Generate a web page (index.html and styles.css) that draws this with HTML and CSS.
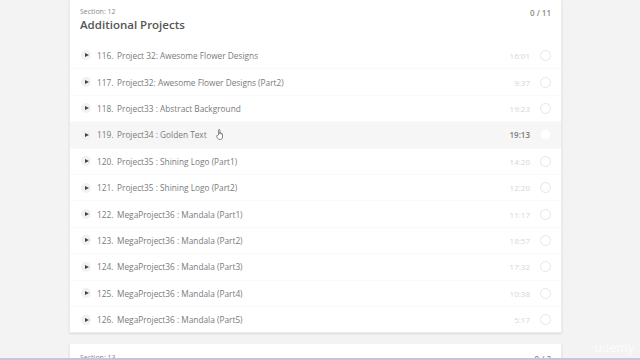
FILE: index.html
```html
<!DOCTYPE html>
<html>
<head>
<meta charset="utf-8">
	<title>Curriculum</title>
	<link rel="stylesheet" href="styles.css">
</head>
<body>
	<div class="page">
		<div class="section">
			<div class="section-head">
				<div class="head-text">
					<div class="section-no">Section: 12</div>
					<div class="section-title">Additional Projects</div>
				</div>
				<div class="count">0 / 11</div>
			</div>
			<ul class="lectures">
				<li><span class="play"></span><span class="num">116.</span><span class="name">Project 32: Awesome Flower Designs</span><span class="time">16:01</span><span class="check"></span></li>
				<li><span class="play"></span><span class="num">117.</span><span class="name">Project32: Awesome Flower Designs (Part2)</span><span class="time">9:37</span><span class="check"></span></li>
				<li><span class="play"></span><span class="num">118.</span><span class="name">Project33 : Abstract Background</span><span class="time">19:23</span><span class="check"></span></li>
				<li class="hover"><span class="play"></span><span class="num">119.</span><span class="name">Project34 : Golden Text<svg class="hand" width="8" height="11" viewBox="0 0 8 11"><path d="M2.5 6V1.2a.7.7 0 0 1 1.4 0V5l.1-1a.7.7 0 0 1 1.3.2V5.3a.6.6 0 0 1 1.2.1V8c0 1.6-1 2.5-2.4 2.5S1.7 9.8 1.2 8.6L.6 7.2a.6.6 0 0 1 1-.6z" fill="#fff" stroke="#555" stroke-width=".7"/></svg></span><span class="time">19:13</span><span class="check"></span></li>
				<li><span class="play"></span><span class="num">120.</span><span class="name">Project35 : Shining Logo (Part1)</span><span class="time">14:20</span><span class="check"></span></li>
				<li><span class="play"></span><span class="num">121.</span><span class="name">Project35 : Shining Logo (Part2)</span><span class="time">12:20</span><span class="check"></span></li>
				<li><span class="play"></span><span class="num">122.</span><span class="name">MegaProject36 : Mandala (Part1)</span><span class="time">11:17</span><span class="check"></span></li>
				<li><span class="play"></span><span class="num">123.</span><span class="name">MegaProject36 : Mandala (Part2)</span><span class="time">18:57</span><span class="check"></span></li>
				<li><span class="play"></span><span class="num">124.</span><span class="name">MegaProject36 : Mandala (Part3)</span><span class="time">17:32</span><span class="check"></span></li>
				<li><span class="play"></span><span class="num">125.</span><span class="name">MegaProject36 : Mandala (Part4)</span><span class="time">10:38</span><span class="check"></span></li>
				<li><span class="play"></span><span class="num">126.</span><span class="name">MegaProject36 : Mandala (Part5)</span><span class="time">5:17</span><span class="check"></span></li>
			</ul>
		</div>
		<div class="section">
			<div class="section-head next-head">
				<div class="head-text">
					<div class="section-no">Section: 13</div>
				</div>
				<div class="count">0 / 2</div>
			</div>
		</div>
	</div>
	<div class="watermark">udemy</div>
	<div class="progress"></div>
</body>
</html>
```

FILE: styles.css
```css
*{
	margin: 0;
	padding: 0;
}
html,body{
	height: 100%;
	overflow: hidden;
}
body{
	background: #f3f3f3;
	font-family: "Open Sans", "Liberation Sans", sans-serif;
	color: #666;
}
.page{
	width: 493px;
	margin-left: 69px;
	display: flex;
	flex-direction: column;
	gap: 11px;
}
.section{
	background: #fff;
	box-shadow: 0 1px 2px rgba(0,0,0,0.1);
	border: 1px solid #ebebeb;
	border-top: none;
}
.section-head{
	display: flex;
	justify-content: space-between;
	align-items: flex-start;
	padding: 6px 10px 10px 10px;
}
.next-head{
	padding-top: 8px;
}
.section-no{
	font-size: 7px;
	line-height: 11px;
	color: #888;
}
.section-title{
	font-size: 11.5px;
	line-height: 15px;
	font-weight: 600;
	color: #555;
}
.count{
	font-size: 8px;
	line-height: 12px;
	font-weight: 600;
	color: #8a8a8a;
	padding-top: 1px;
}
.lectures li{
	list-style: none;
	height: 26.4px;
	display: flex;
	align-items: center;
	padding: 0 10px 0 11px;
	border-top: 1px solid #fafafa;
	box-sizing: border-box;
	font-size: 8.3px;
	color: #7a7a7a;
}
.lectures li:first-child{
	border-top: none;
}
.lectures li.hover{
	background: #f6f6f6;
}
.play{
	width: 10px;
	height: 10px;
	border-radius: 50%;
	background: #f1f1f1;
	display: flex;
	align-items: center;
	justify-content: center;
	margin-right: 6px;
}
.play::after{
	content: "";
	border-left: 4px solid #444;
	border-top: 2.5px solid transparent;
	border-bottom: 2.5px solid transparent;
	margin-left: 1px;
}
.num{
	width: 20px;
}
.name{
	flex: 1;
	display: flex;
	align-items: center;
}
.hand{
	margin-left: 9px;
}
.time{
	font-size: 8px;
	color: #d6d6d6;
	margin-right: 10px;
}
.hover .time{
	color: #7a7a7a;
	font-weight: 600;
}
.check{
	width: 9px;
	height: 9px;
	border-radius: 50%;
	border: 1px solid #e6e6e6;
	background: #fff;
}
.hover .check{
	border-color: #fafafa;
}
.watermark{
	position: fixed;
	right: 6px;
	bottom: 4px;
	font-size: 12px;
	color: rgba(255,255,255,0.75);
	letter-spacing: 0.2px;
}
.progress{
	position: fixed;
	left: 0;
	right: 0;
	bottom: 0;
	height: 2px;
	background: #c9c3df;
}
```
